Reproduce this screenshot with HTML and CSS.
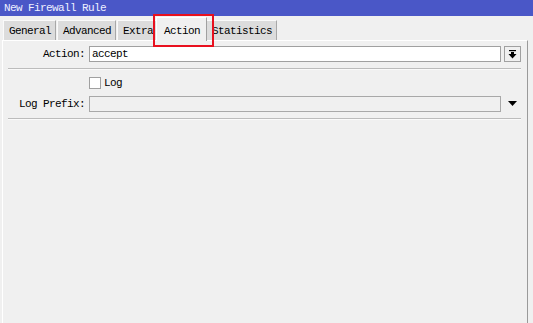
FILE: index.html
```html
<!DOCTYPE html>
<html lang="en">
<head>
    <meta charset="UTF-8">
    <title>New Firewall Rule</title>
    <link rel="stylesheet" href="styles.css">
</head>
<body>
    <div class="title-bar">New Firewall Rule</div>

    <div class="tabs">
        <div class="tab">General</div>
        <div class="tab">Advanced</div>
        <div class="tab">Extra</div>
        <div class="tab active">Action</div>
        <div class="tab">Statistics</div>
    </div>

    <div class="panel">
        <div class="form-row">
            <label class="field-label">Action:</label>
            <div class="text-field">accept</div>
            <div class="combo-button">
                <svg width="9" height="9" viewBox="0 0 9 9">
                    <rect x="1" y="0" width="7" height="1.2" fill="#000"/>
                    <rect x="3" y="2" width="3" height="2" fill="#000"/>
                    <polygon points="0.5,4 8.5,4 4.5,8.5" fill="#000"/>
                </svg>
            </div>
        </div>
        <div class="separator"></div>

        <div class="form-row check-row">
            <span></span>
            <label class="check-label"><span class="checkbox"></span>Log</label>
        </div>

        <div class="form-row">
            <label class="field-label">Log Prefix:</label>
            <div class="text-field disabled"></div>
            <div class="drop-arrow">
                <svg width="9" height="6" viewBox="0 0 9 6">
                    <polygon points="0,0 9,0 4.5,5" fill="#000"/>
                </svg>
            </div>
        </div>
        <div class="separator"></div>
    </div>

    <!-- marca de la pestaña -->
    <div class="highlight"></div>
</body>
</html>
```

FILE: styles.css
```css
body {
    margin: 0;
    height: 100vh;
    display: flex;
    flex-direction: column;
    background: #f0f0f0;
    font-family: "Liberation Mono", "DejaVu Sans Mono", monospace;
    font-size: 11px;
    letter-spacing: -0.6px;
    color: #000;
    overflow: hidden;
}
.title-bar {
    height: 16px;
    box-sizing: border-box;
    padding: 1px 0 0 4px;
    line-height: 15px;
    background: #4a57c7;
    color: #eef0ff;
}
.tabs {
    display: flex;
    align-items: flex-end;
    margin-top: 1px;
    margin-bottom: -1px;
    padding-left: 3px;
}
.tab {
    line-height: 18px;
    padding: 1px 4px 0 5px;
    margin-right: 1px;
    margin-bottom: 1px;
    background: #dcdcdc;
    border-top: 1px solid #fafafa;
    border-left: 1px solid #fafafa;
    border-right: 1px solid #a8a8a8;
}
.tab.active {
    position: relative;
    z-index: 1;
    margin: 0 -1px 0 -3px;
    padding: 3px 6px 0 7px;
    line-height: 20px;
    background: #f0f0f0;
    border-top-color: #ffffff;
    border-left-color: #ffffff;
    border-right-color: #a0a0a0;
}
.panel {
    flex: 1;
    margin: 0 5px 0 2px;
    padding: 5px 6px 0 5px;
    border-top: 1px solid #ffffff;
    border-left: 1px solid #ffffff;
    border-right: 1px solid #9a9a9a;
}
.form-row {
    display: grid;
    grid-template-columns: 77px 1fr 16px;
    column-gap: 4px;
    align-items: center;
    height: 16px;
}
.form-row > :nth-child(3) {
    margin-left: -1px;
}
.field-label {
    text-align: right;
}
.text-field {
    box-sizing: border-box;
    height: 16px;
    line-height: 14px;
    padding-left: 2px;
    background: #ffffff;
    border: 1px solid #a0a0a0;
}
.text-field.disabled {
    background: #f0f0f0;
    border-color: #a8a8a8;
}
.combo-button {
    box-sizing: border-box;
    height: 16px;
    display: flex;
    align-items: center;
    justify-content: center;
    background: #f0f0f0;
    border: 1px solid #a0a0a0;
}
.drop-arrow {
    display: flex;
    justify-content: center;
    align-items: center;
    height: 16px;
    padding-right: 1px;
}
.separator {
    margin: 6px 0;
    border-top: 1px solid #bcbcbc;
    border-bottom: 1px solid #fafafa;
}
.check-row {
    height: 14px;
    margin-bottom: 6px;
}
.check-label {
    display: flex;
    align-items: center;
    gap: 3px;
    grid-column: 2;
}
.checkbox {
    box-sizing: border-box;
    width: 12px;
    height: 12px;
    background: #ffffff;
    border: 1px solid #a0a0a0;
}
.highlight {
    position: absolute;
    left: 153px;
    top: 14px;
    width: 61px;
    height: 33px;
    box-sizing: border-box;
    border: 2px solid #e8101e;
}
```
